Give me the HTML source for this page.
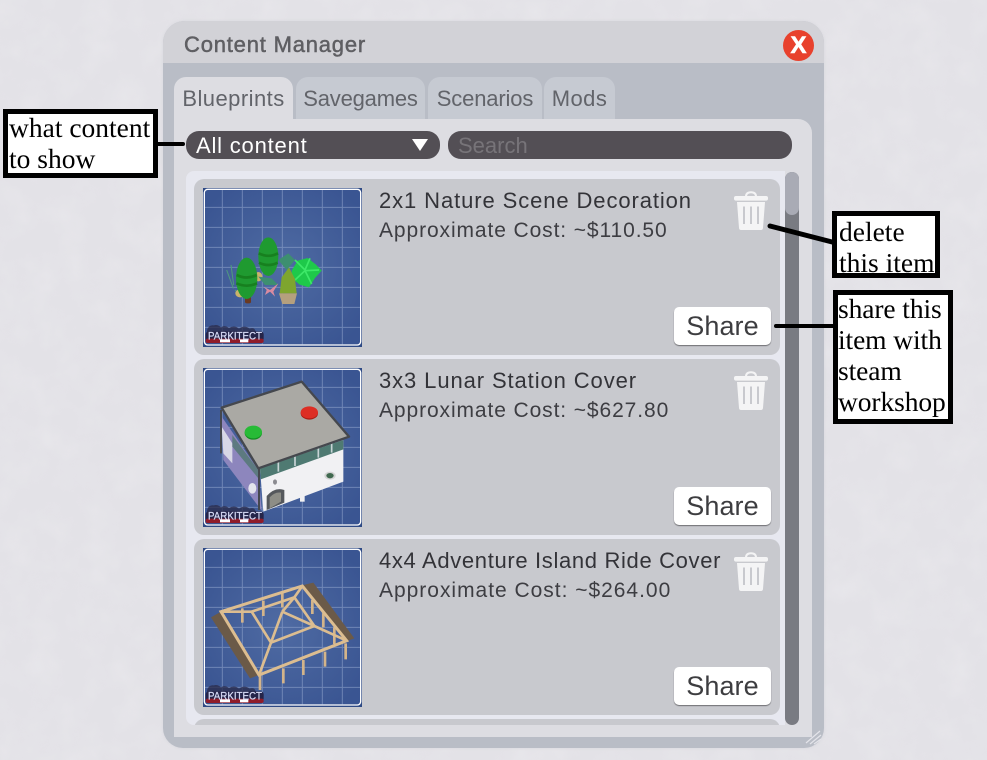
<!DOCTYPE html>
<html lang="en">
<head>
<meta charset="utf-8">
<title>Content Manager</title>
<style>
*{box-sizing:border-box}
html,body{margin:0;padding:0}
body{width:987px;height:760px;position:relative;overflow:hidden;background:#e3e2e7;font-family:"Liberation Sans",sans-serif}
.abs{position:absolute}
.win{position:absolute;left:163px;top:21px;width:661px;height:727px;background:#b9bdc6;border-radius:22px 22px 20px 20px;overflow:hidden;box-shadow:0 0 3px #d6d6dc}
.titlebar{position:absolute;left:0;top:0;width:100%;height:42px;background:#d2d2d7}
.title{position:absolute;left:21px;top:11px;font-size:22px;line-height:26px;color:#5f5f63;letter-spacing:.8px;-webkit-text-stroke:.5px #5f5f63;white-space:nowrap}
.close{position:absolute;left:783px;top:30px;width:31px;height:31px;border-radius:50%;background:#e8412d;color:#fff;font-size:24px;font-weight:700;line-height:31px;text-align:center;-webkit-text-stroke:.6px #fff}
.tab{position:absolute;top:77px;height:42px;background:#c6cad2;border-radius:12px 12px 0 0;color:#62646a;font-size:22px;line-height:44px;letter-spacing:.45px;text-align:center;white-space:nowrap}
.tab.on{background:#dddde2}
.panel{position:absolute;left:174px;top:119px;width:638px;height:618px;background:#dddde2;border-radius:0 14px 0 0}
.dd{position:absolute;top:131px;height:28px;background:#534f55;border-radius:13px;color:#fff;font-size:22px;line-height:29px;white-space:nowrap;letter-spacing:.8px}
.list{position:absolute;left:186px;top:171px;width:599px;height:554px;background:#e7e8f0;border-radius:8px 0 0 8px;overflow:hidden}
.item{position:absolute;left:8px;width:586px;height:176px;background:#c8c9ce;border-radius:10px}
.name{position:absolute;left:185px;top:9px;font-size:22px;line-height:26px;color:#333338;letter-spacing:.9px;white-space:nowrap}
.cost{position:absolute;left:185px;top:39px;font-size:21px;line-height:26px;color:#3d3d42;letter-spacing:.9px;white-space:nowrap}
.share{position:absolute;left:480px;top:128px;width:97px;height:38px;background:#fff;border-radius:5px;box-shadow:0 1px 1px #6e6e72;color:#3d3d40;font-size:27px;line-height:39px;letter-spacing:.1px;text-align:center}
.thumb{position:absolute;left:1px;top:1px;width:175px;height:175px}
.trash{position:absolute;left:540px;top:12px;width:34px;height:39px}
.track{position:absolute;left:785px;top:172px;width:14px;height:553px;background:#797b82;border-radius:7px}
.thumbbar{position:absolute;left:0;top:0;width:14px;height:43px;background:#a9abb5;border-radius:7px}
.note{position:absolute;background:#fff;border:5px solid #000;font-family:"Liberation Serif",serif;color:#000;font-size:27.5px;line-height:31px;white-space:nowrap}
.note span{display:block}
</style>
</head>
<body>
<svg width="0" height="0" style="position:absolute">
<defs>
<radialGradient id="bg" cx="50%" cy="50%" r="62%"><stop offset="0" stop-color="#4f6ba3"/><stop offset="1" stop-color="#3a5592"/></radialGradient>
<filter id="mott" x="0" y="0" width="100%" height="100%"><feTurbulence type="fractalNoise" baseFrequency=".035" numOctaves="3" seed="4"/><feColorMatrix values="0 0 0 0 1  0 0 0 0 1  0 0 0 0 1  1.600 0 0 0 -.62"/></filter>
<g id="tbg">
<rect x="24" y="24" width="477" height="477" fill="#2f4a85"/>
<rect x="28" y="28" width="469" height="467" rx="10" fill="url(#bg)" stroke="#fff" stroke-width="4"/>
<path d="M82 30V493M142 30V493M202 30V493M262 30V493M322 30V493M382 30V493M442 30V493M30 82H495M30 142H495M30 202H495M30 262H495M30 322H495M30 382H495M30 442H495" stroke="#8fa3cb" stroke-width="3" opacity=".6"/>
</g>
<g id="bin">
<path d="M12 5.500C12 2.500 14 1.200 17 1.200S22 2.500 22 5.500" fill="none" stroke="#f4f4f5" stroke-width="2"/>
<rect x="0" y="5" width="34" height="4.600" rx="2" fill="#f4f4f5"/>
<path d="M3 11H31L29 37Q28.800 39 27 39H7Q5.200 39 5 37Z" fill="#f4f4f5"/>
<path d="M10 15.500V33M17 15.500V33M24 15.500V33" stroke="#c8c9ce" stroke-width="2"/>
</g>
<g id="logobg">
<path d="M36 452q4-18 20-16 12-4 22 6 12-8 24 2 16-10 30 2 16-12 32 0 14-6 18 8 8 6 14 8v24H36z" fill="#2a2a48" opacity=".75"/>
<rect x="32" y="454" width="174" height="30" rx="9" fill="#25254a"/>
<rect x="32" y="476" width="174" height="13" rx="6" fill="#8f1c2a"/>
<rect x="75" y="478" width="30" height="9" fill="#fff"/><rect x="135" y="478" width="25" height="9" fill="#fff"/>
</g>
</defs>
</svg>

<svg class="abs" style="left:0;top:0" width="987" height="760"><rect width="987" height="760" filter="url(#mott)" opacity=".16"/></svg>

<div class="win"><div class="titlebar"><div class="title">Content Manager</div></div></div>
<div class="close">X</div>

<div class="tab on" style="left:174px;width:119px">Blueprints</div>
<div class="tab" style="left:296px;width:129px;letter-spacing:-.2px">Savegames</div>
<div class="tab" style="left:428px;width:114px;letter-spacing:-.15px">Scenarios</div>
<div class="tab" style="left:544px;width:71px">Mods</div>
<div class="panel"></div>

<div class="dd" style="left:186px;width:254px;padding-left:10px">All content
<svg class="abs" style="left:225px;top:8px" width="18" height="12" viewBox="0 0 18 12"><path d="M1 0H17L9 12Z" fill="#fff"/></svg>
</div>
<div class="dd" style="left:448px;width:344px;padding-left:10px;color:#777479;letter-spacing:0">Search</div>

<div class="list">
<div class="item" style="top:8px">
<svg class="thumb" viewBox="0 0 525 525"><use href="#tbg"/>
<path d="M95 270l20 55M108 255l8 60M120 330l30 25" stroke="#4f9c7d" stroke-width="3" fill="none"/>
<ellipse cx="135" cy="340" rx="14" ry="12" fill="#c9b36a"/>
<ellipse cx="190" cy="290" rx="12" ry="14" fill="#c9b36a"/>
<path d="M250 240l30-20 20 20-25 30zM190 290l40 5 20 20-40 0z" fill="#3d8f70"/>
<path d="M205 320l20 10 25-20-15 25 5 15-15-15-15 10 5-15z" fill="#d98ba0"/>
<rect x="150" y="340" width="18" height="30" rx="5" fill="#6b3a22"/>
<ellipse cx="155" cy="295" rx="32" ry="62" fill="#1f9a30"/>
<path d="M125 285q30 15 60 0M124 310q32 14 62 0" stroke="#17801f" stroke-width="8" fill="none"/>
<ellipse cx="220" cy="230" rx="30" ry="58" fill="#1f9a30"/>
<path d="M191 220q30 15 58 0M192 248q28 14 56 0" stroke="#17801f" stroke-width="8" fill="none"/>
<path d="M290 272l18-30 30-8 25 20 17 18-20 22-18 28-28-8-22-18z" fill="#1ec94a"/>
<path d="M300 240l30 30M345 235l-15 35M372 270l-42 2M350 312l-20-40M300 300l30-28" stroke="#3de868" stroke-width="5"/>
<path d="M254 340l6-48 22-30 18 35 5 43z" fill="#7ea52e"/>
<path d="M252 340h54l-8 32h-36z" fill="#b5a07e"/>
<use href="#logobg"/>
<text x="39" y="479" font-family="Liberation Sans" font-size="32" fill="#d5d9f4" stroke="#d5d9f4" stroke-width=".8" textLength="162" lengthAdjust="spacingAndGlyphs">PARKITECT</text>
</svg>
<div class="name">2x1 Nature Scene Decoration</div>
<div class="cost">Approximate Cost: ~$110.50</div>
<svg class="trash" viewBox="0 0 34 39"><use href="#bin"/></svg>
<div class="share">Share</div>
</div>

<div class="item" style="top:188px">
<svg class="thumb" viewBox="0 0 525 525"><use href="#tbg"/>
<path d="M80 170L190 330L200 452L85 300Z" fill="#8d86bd"/>
<path d="M80 200L112 250V310L85 280Z" fill="#d8d8e6"/>
<path d="M112 225L190 330V355L112 260Z" fill="#5d7a80"/>
<path d="M195 325L445 240V365L205 455Z" fill="#f1f1f3"/>
<path d="M195 325L445 240V268L197 358Z" fill="#4f7a72"/>
<path d="M250 305l0 30M300 290l0 28M370 265l0 28M410 250l0 28" stroke="#c8d4d6" stroke-width="5"/>
<path d="M215 450V408Q240 380 268 390V428Z" fill="#55585c"/><path d="M224 445V412Q240 395 258 398V425Z" fill="#8d8d86"/>
<ellipse cx="405" cy="347" rx="17" ry="12" fill="#d4d4d4"/><ellipse cx="405" cy="347" rx="11" ry="8" fill="#41694f"/>
<ellipse cx="240" cy="366" rx="6" ry="8" fill="#8b8b90"/>
<ellipse cx="172" cy="385" rx="12" ry="16" fill="#e4e4ec"/>
<rect x="315" y="405" width="14" height="20" fill="#f1f1f3"/>
<path d="M80 143L320 65L462 230L190 325Z" fill="#aaa9a4" stroke="#45484e" stroke-width="7" stroke-linejoin="round"/>
<path d="M192 325V450M78 150V280" stroke="#45484e" stroke-width="6"/>
<ellipse cx="175" cy="219" rx="26" ry="20" fill="#138c22"/><ellipse cx="175" cy="216" rx="26" ry="19" fill="#27bb36"/>
<ellipse cx="343" cy="160" rx="26" ry="19" fill="#a81d15"/><ellipse cx="343" cy="157" rx="26" ry="18" fill="#dd2e24"/>
<use href="#logobg"/>
<text x="39" y="479" font-family="Liberation Sans" font-size="32" fill="#d5d9f4" stroke="#d5d9f4" stroke-width=".8" textLength="162" lengthAdjust="spacingAndGlyphs">PARKITECT</text>
</svg>
<div class="name">3x3 Lunar Station Cover</div>
<div class="cost">Approximate Cost: ~$627.80</div>
<svg class="trash" viewBox="0 0 34 39"><use href="#bin"/></svg>
<div class="share">Share</div>
</div>

<div class="item" style="top:368px">
<svg class="thumb" viewBox="0 0 525 525"><use href="#tbg"/>
<path d="M48 232L78 215L192 405L165 415Z" fill="#6b5a48"/>
<path d="M325 135L355 128L478 295L450 305Z" fill="#6b5a48"/>
<path d="M142 205V248M205 182V228M262 160V202M352 180V222M385 220V262M418 262V312M452 310V358M390 335V380M325 360V405M265 385V430M195 405V450" stroke="#d3b48a" stroke-width="8"/>
<path d="M78 215L322 138L455 302L192 405Z" fill="none" stroke="#dcbd90" stroke-width="9"/>
<path d="M170 215L298 172L358 258L228 308Z" fill="none" stroke="#dcbd90" stroke-width="8"/>
<path d="M322 138L298 172M78 215L170 215M358 258L455 302M192 405L228 308M262 215L298 172M262 215L228 308M262 215L358 258" stroke="#dcbd90" stroke-width="8"/>
<use href="#logobg"/>
<text x="39" y="479" font-family="Liberation Sans" font-size="32" fill="#d5d9f4" stroke="#d5d9f4" stroke-width=".8" textLength="162" lengthAdjust="spacingAndGlyphs">PARKITECT</text>
</svg>
<div class="name" style="letter-spacing:.66px">4x4 Adventure Island Ride Cover</div>
<div class="cost" style="letter-spacing:.98px">Approximate Cost: ~$264.00</div>
<svg class="trash" viewBox="0 0 34 39" style="top:13px"><use href="#bin"/></svg>
<div class="share">Share</div>
</div>

<div class="item" style="top:548px;height:20px"></div>
</div>

<div class="track"><div class="thumbbar"></div></div>

<svg class="abs" style="left:805px;top:728px" width="18" height="18" viewBox="0 0 18 18"><path d="M1 15L15 3M5 16L16 7M9 16L16 11" stroke="#e4e4ea" stroke-width="1.200"/></svg>

<svg class="abs" style="left:0;top:0;pointer-events:none" width="987" height="760">
<path d="M155 144H183" stroke="#000" stroke-width="4" stroke-linecap="round"/>
<path d="M770 226L836 243" stroke="#000" stroke-width="5" stroke-linecap="round"/>
<path d="M776 326H836" stroke="#000" stroke-width="4" stroke-linecap="round"/>
</svg>

<div class="note" style="left:3px;top:109px;width:155px;height:69px;padding:0 0 0 1px"><span style="margin-top:-2px">what content<br>to show</span></div>
<div class="note" style="left:832px;top:211px;width:108px;height:67px;padding:0 0 0 2px">delete<br>this item</div>
<div class="note" style="left:833px;top:290px;width:120px;height:134px;padding:0;letter-spacing:-.1px"><span style="margin-top:-2px">share this<br>item with<br>steam<br>workshop</span></div>
</body>
</html>
